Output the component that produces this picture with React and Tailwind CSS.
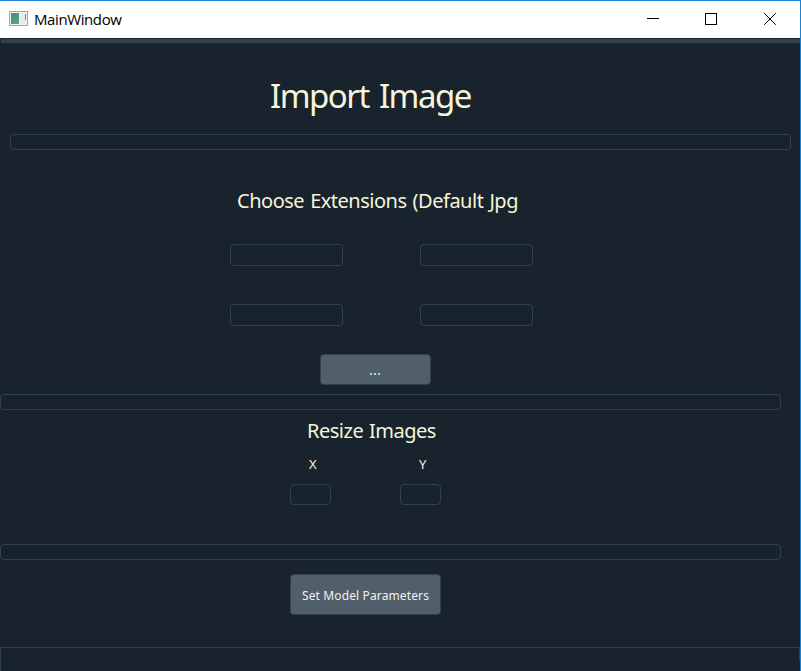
import React from "react";

function Field({ className }) {
  return <div className={`rounded-[4px] border border-[#32414b] ${className}`} />;
}

function TitleBar() {
  return (
    <header className="flex h-[38px] items-center border-t border-r border-[#1883d7] bg-white pl-[9px]">
      <svg className="-mt-[2px]" width="19" height="15" viewBox="0 0 19 15" shapeRendering="crispEdges">
        <defs>
          <linearGradient id="pane" x1="0" y1="0" x2="0.6" y2="1">
            <stop offset="0" stopColor="#4c7fa8" />
            <stop offset="1" stopColor="#55a878" />
          </linearGradient>
        </defs>
        <rect x="0.5" y="0.5" width="18" height="14" fill="#f1f1f1" stroke="#a2a6aa" />
        <rect x="2" y="2" width="8" height="11" fill="url(#pane)" />
        <rect x="11" y="2" width="5" height="11" fill="#e8eaec" />
        <rect x="16" y="3" width="1" height="6" fill="#55a088" />
      </svg>
      <span className="-mt-[2px] ml-[6px] w-[120px] whitespace-nowrap font-['Open_Sans',sans-serif] text-[15px] leading-5 tracking-[-0.4px] text-black">
        MainWindow
      </span>
      <svg className="-mt-[2px] ml-auto mr-[24px]" width="130" height="14" viewBox="0 0 130 14" fill="none" stroke="#000">
        <path d="M1 6.5H13" />
        <rect x="59.5" y="1.5" width="11" height="11" />
        <path d="M118.2 1.2L129.8 12.8M129.8 1.2L118.2 12.8" />
      </svg>
    </header>
  );
}

export default function App() {
  return (
    <div className="flex h-[671px] w-[801px] flex-col overflow-hidden bg-[#19232d] font-['Noto_Sans',sans-serif] text-[#f5f5dc]">
      <TitleBar />
      <main className="flex flex-1 flex-col border-r border-[#1883d7]">
        <div className="mt-px ml-px h-[4px] shrink-0 bg-[#32414b]" />
        <h1 className="mt-[31px] ml-[270px] h-[44px] whitespace-nowrap text-[33px] leading-[44px]">
          <span className="tracking-[-1.5px] [word-spacing:3px]">Import Image</span>
        </h1>
        <Field className="mt-4 ml-[10px] h-4 w-[781px]" />
        <h2 className="mt-[36px] ml-[237px] h-[30px] whitespace-nowrap text-[20px] leading-[30px]">
          <span className="tracking-[-0.49px] [word-spacing:1.3px]">Choose Extensions (Default Jpg</span>
        </h2>
        <div className="mt-7 ml-[230px] grid w-[303px] grid-cols-[113px_113px] justify-between gap-y-[38px]">
          <Field className="h-[22px]" />
          <Field className="h-[22px]" />
          <Field className="h-[22px]" />
          <Field className="h-[22px]" />
        </div>
        <button className="mt-7 ml-[320px] flex h-[31px] w-[111px] shrink-0 items-center justify-center rounded-[4px] border border-[#32414b] bg-[#505f69] text-[#d5f0f8]">
          <span className="-mt-[2px] pr-px text-[15px] leading-5">...</span>
        </button>
        <Field className="mt-[9px] h-4 w-[781px]" />
        <h2 className="mt-[6px] ml-[307px] h-[30px] whitespace-nowrap text-[20px] leading-[30px]">
          <span className="tracking-[-0.49px] [word-spacing:1px]">Resize Images</span>
        </h2>
        <div className="mt-[8px] ml-[309px] flex h-5 w-[123px] justify-between text-[13px] leading-5">
          <span className="w-2">X</span>
          <span className="w-[13px]">Y</span>
        </div>
        <div className="mt-[10px] ml-[290px] flex w-[151px] justify-between">
          <Field className="h-[21px] w-[41px]" />
          <Field className="h-[21px] w-[41px]" />
        </div>
        <Field className="mt-[39px] h-4 w-[781px]" />
        <button className="mt-[14px] ml-[290px] flex h-[41px] w-[151px] shrink-0 items-center justify-center rounded-[4px] border border-[#32414b] bg-[#505f69] text-[#f0f0f0]">
          <span className="mt-[2px] whitespace-nowrap text-[12px] leading-5 tracking-[0.13px]">Set Model Parameters</span>
        </button>
        <div className="mt-8 flex h-6 justify-end border-t border-l border-[#32414b]">
          <div className="h-3 w-px bg-[#32414b]" />
        </div>
      </main>
    </div>
  );
}
